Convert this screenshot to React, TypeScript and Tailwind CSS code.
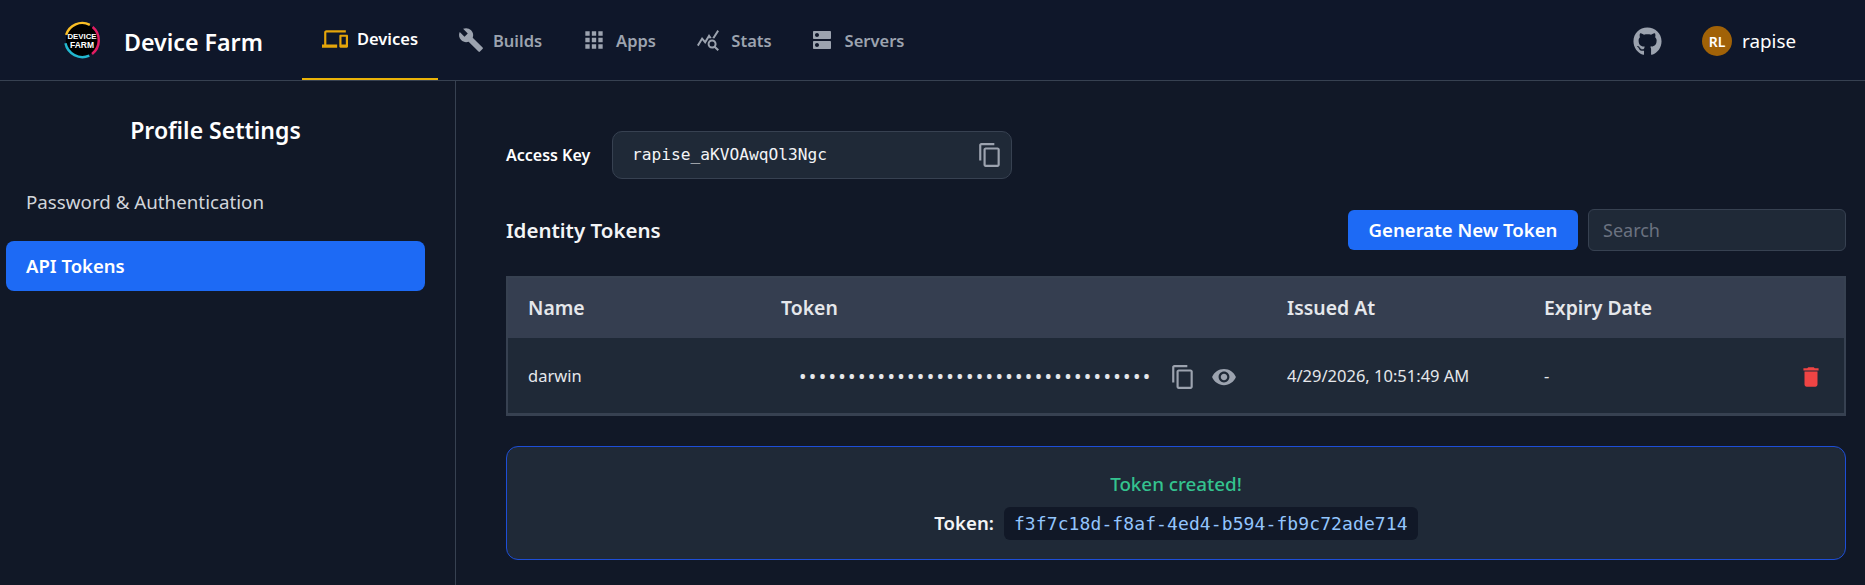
import React from 'react';
import { FaGithub } from 'react-icons/fa';
import {
  MdApps,
  MdBuild,
  MdContentCopy,
  MdDelete,
  MdDns,
  MdOutlineDevices,
  MdQueryStats,
  MdVisibility,
} from 'react-icons/md';

const sans = { fontFamily: '"Noto Sans", "Open Sans", sans-serif' };
const mono = { fontFamily: '"DejaVu Sans Mono", monospace' };

// Logo: black disc with the three coloured arcs round it
const Logo = () => (
  <svg width="38" height="38" viewBox="0 0 34 34" fill="none">
    <circle cx="17" cy="17" r="14.5" fill="#000" />
    <path d="M2.8 12.5 A15 15 0 0 1 24 3.4" stroke="#fbbf24" strokeWidth="2.2" />
    <path d="M26.5 5.4 A15.5 15.5 0 0 1 26 29.5" stroke="#e11d63" strokeWidth="2.2" />
    <path d="M23.5 31 A15.5 15.5 0 0 1 2.2 20" stroke="#22b8cf" strokeWidth="2.2" />
    <text x="17" y="16" textAnchor="middle" fontSize="7" fontWeight="700" fill="#fff" fontFamily="Liberation Sans, sans-serif">DEVICE</text>
    <text x="17" y="24" textAnchor="middle" fontSize="7.6" fontWeight="700" fill="#fff" fontFamily="Liberation Sans, sans-serif">FARM</text>
  </svg>
);

const navItems = [
  { label: 'Builds', icon: <MdBuild size={26} />, cls: 'w-[124px] gap-[9px]' },
  { label: 'Apps', icon: <MdApps size={26} />, cls: 'w-[113px] gap-[9px]' },
  { label: 'Stats', icon: <MdQueryStats size={24} />, cls: 'w-[118px] gap-[11px]' },
  { label: 'Servers', icon: <MdDns size={24} />, cls: 'w-[128px] gap-[11px]' },
];

const Header = () => (
  <header className="flex h-[81px] items-stretch border-b border-[#374151] bg-[#0f172a]">
    <div className="flex w-[302px] items-center pl-[63px]">
      <Logo />
      <span className="ml-[23px] pt-[5px] text-[23.2px] font-semibold text-white">Device Farm</span>
    </div>
    <nav className="flex">
      <a className="flex w-[136px] items-center justify-center gap-[9px] border-b-2 border-[#eab308] text-[16.5px] font-semibold text-white">
        <MdOutlineDevices size={26} className="text-[#e5a50a]" />
        <span className="pt-[1px]">Devices</span>
      </a>
      {navItems.map((item) => (
        <a key={item.label} className={`flex ${item.cls} items-center justify-center text-[16.5px] font-semibold text-[#9ca3af]`}>
          {item.icon}
          <span className="pt-[2px]">{item.label}</span>
        </a>
      ))}
    </nav>
    <div className="ml-auto flex items-center pr-[69px] pt-[2px]">
      <FaGithub size={29} className="mr-[40px] text-[#9ca3af]" />
      <span className="flex h-[30px] w-[30px] items-center justify-center rounded-full bg-[#a16207] text-[14px] font-semibold text-white">RL</span>
      <span className="ml-[10px] text-[18.8px] text-white">rapise</span>
    </div>
  </header>
);

const Sidebar = () => (
  <aside className="w-[456px] shrink-0 border-r border-[#374151] pl-[6px] pr-[30px] pt-[34px]">
    <h2 className="text-center text-[23px] font-semibold leading-[30px] text-white">Profile Settings</h2>
    <ul className="mt-[32px] flex flex-col">
      <li className="flex h-[50px] items-center rounded-lg px-[20px] text-[18.75px] text-[#d1d5db]">Password &amp; Authentication</li>
      <li className="mt-[14px] flex h-[50px] items-center rounded-lg bg-[#1d6af5] px-[20px] text-[18.5px] font-semibold text-white">API Tokens</li>
    </ul>
  </aside>
);

const TokenTable = () => (
  <div className="mt-[25px] border-2 border-b-[3px] border-[#374151]">
    <table className="w-full table-fixed text-left">
      <thead className="bg-[#353e50]">
        <tr className="h-[60px] text-[19.4px] text-[#e5e7eb]">
          <th className="w-[273px] pl-[20px] font-semibold">Name</th>
          <th className="w-[506px] font-semibold">Token</th>
          <th className="w-[257px] font-semibold">Issued At</th>
          <th className="font-semibold">Expiry Date</th>
          <th className="w-[60px]" />
        </tr>
      </thead>
      <tbody className="bg-[#1f2937]">
        <tr className="h-[75px] text-[16.5px] text-[#e5e7eb] [&>td]:pt-[2px]">
          <td className="pl-[20px]">darwin</td>
          <td>
            <div className="flex items-center">
              <span className="ml-[18px] w-[371px] whitespace-nowrap text-[20px] leading-none tracking-[2.3px] text-[#e5e7eb]">••••••••••••••••••••••••••••••••••••</span>
              <MdContentCopy size={26} className="text-[#9ca3af]" />
              <MdVisibility size={26} className="ml-[15px] text-[#9ca3af]" />
            </div>
          </td>
          <td>4/29/2026, 10:51:49 AM</td>
          <td>-</td>
          <td className="pl-[14px]">
            <MdDelete size={26} className="text-[#ef4444]" />
          </td>
        </tr>
      </tbody>
    </table>
  </div>
);

const MainPanel = () => (
  <main className="flex-1 pl-[50px] pr-[19px] pt-[50px]">
    <div className="flex items-center">
      <span className="w-[106px] text-[16px] font-semibold text-white">Access Key</span>
      <div className="flex h-[48px] w-[400px] items-center justify-between rounded-[10px] border border-[#374151] bg-[#1f2937] pl-[19px] pr-[8px]">
        <span className="text-[16.2px] text-[#f3f4f6]" style={mono}>rapise_aKVOAwqOl3Ngc</span>
        <MdContentCopy size={26} className="text-[#9ca3af]" />
      </div>
    </div>
    <div className="mt-[30px] flex items-center justify-between">
      <h3 className="text-[20.5px] font-semibold text-[#f3f4f6]">Identity Tokens</h3>
      <div className="flex items-center gap-[10px]">
        <button className="h-[40px] w-[230px] rounded-md bg-[#1d6af5] text-[18.6px] font-semibold text-white">Generate New Token</button>
        <input
          placeholder="Search"
          className="h-[42px] w-[258px] rounded-md border border-[#374151] bg-[#1f2937] px-[14px] text-[18px] text-white outline-none placeholder:text-[#6b7280]"
        />
      </div>
    </div>
    <TokenTable />
    <div className="mt-[30px] flex h-[114px] flex-col items-center justify-center rounded-xl border border-[#1d4ed8] bg-[#1f2937] pt-[4px]">
      <p className="text-[18.8px] font-medium leading-[26px] text-[#34c38f]">Token created!</p>
      <p className="mt-[10px] flex items-center text-[18.6px] font-semibold text-[#f3f4f6]">
        Token:
        <code className="ml-[10px] rounded-md bg-[#111827] px-[10px] py-[4px] text-[18px] font-normal leading-[25px] tracking-[0.1px] text-[#93c5fd]" style={mono}>f3f7c18d-f8af-4ed4-b594-fb9c72ade714</code>
      </p>
    </div>
  </main>
);

export default function App() {
  return (
    <div className="flex h-[585px] flex-col overflow-hidden bg-[#111827]" style={sans}>
      <Header />
      <div className="flex flex-1">
        <Sidebar />
        <MainPanel />
      </div>
    </div>
  );
}
